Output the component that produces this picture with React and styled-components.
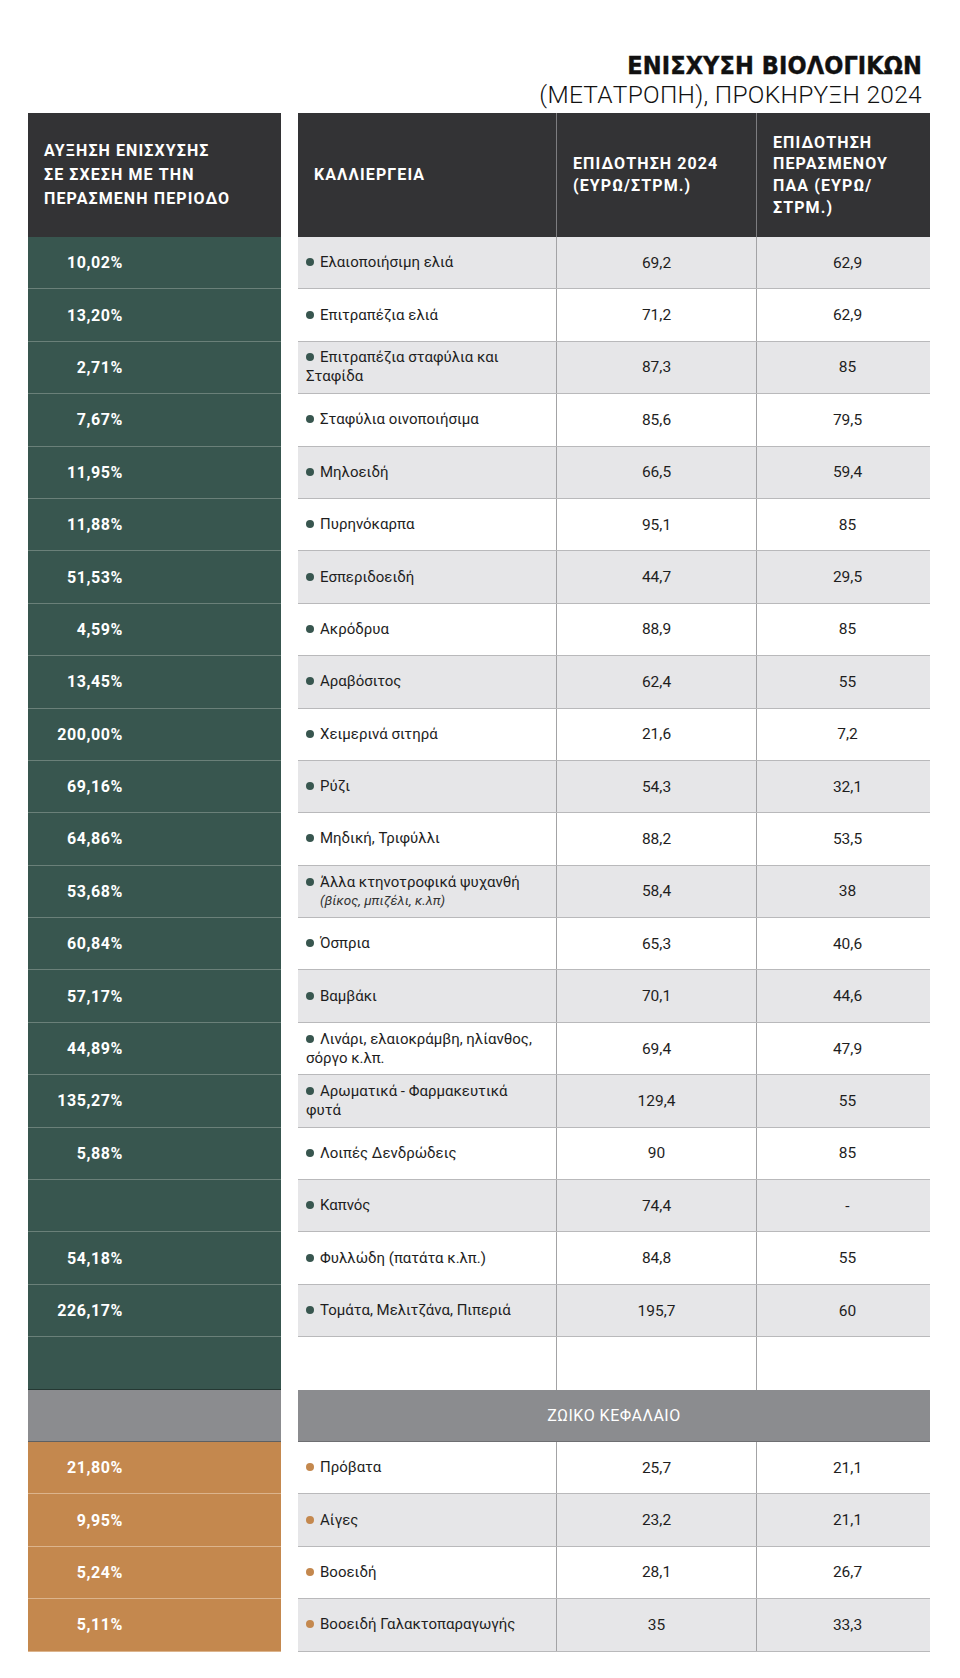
import React from "react";
import styled, { createGlobalStyle } from "styled-components";

const ROW_H = 52.4;
const GREEN = "#38564f";
const ORANGE = "#c4884e";
const GREY = "#8b8c8f";
const DARK = "#333335";

const Global = createGlobalStyle`
  html, body { margin: 0; padding: 0; background: #fff; }
  body { font-family: Roboto, "Noto Sans", sans-serif; color: #222; }
`;

const Page = styled.div`
  width: 960px;
  box-sizing: border-box;
  padding: 51px 30px 26px 28px;
`;

const TitleBlock = styled.header`
  text-align: right;
  padding-right: 8px;
  margin-bottom: 4px;
`;

const TitleMain = styled.h1`
  margin: 0;
  font-family: "Liberation Sans Narrow", "DejaVu Sans Condensed", sans-serif;
  font-weight: 700;
  font-size: 25px;
  line-height: 30px;
  letter-spacing: 0.1px;
  color: #111;
  -webkit-text-stroke: 0.4px #111;
`;

const TitleSub = styled.div`
  font-family: Roboto, sans-serif;
  font-weight: 300;
  font-size: 24.5px;
  line-height: 28px;
  color: #111;
  letter-spacing: 0.3px;
`;

const Body = styled.div`
  display: flex;
  gap: 17px;
  align-items: flex-start;
`;

const Side = styled.div`
  width: 253px;
  display: flex;
  flex-direction: column;
`;

const HeadBox = styled.div`
  height: 124px;
  box-sizing: border-box;
  background: ${DARK};
  color: #fff;
  font-weight: 700;
  font-size: 16px;
  letter-spacing: 1.1px;
  display: flex;
  align-items: center;
  padding-left: ${(p) => p.$pl || 16}px;
  line-height: ${(p) => p.$lh || 21.7}px;
  border-right: ${(p) => (p.$divider ? "1px solid #7d7d80" : "none")};
`;

const PctCell = styled.div`
  height: ${ROW_H}px;
  box-sizing: border-box;
  background: ${(p) => p.$bg};
  border-bottom: 1px solid ${(p) => p.$line};
  display: flex;
  align-items: center;
`;

const PctText = styled.span`
  width: 95px;
  text-align: right;
  color: #fff;
  font-weight: 700;
  font-size: 16px;
  letter-spacing: 0.6px;
`;

const Table = styled.div`
  width: 632px;
  display: flex;
  flex-direction: column;
`;

const Row = styled.div`
  display: grid;
  grid-template-columns: 259px 200px 173px;
  height: ${(p) => (p.$head ? 124 : ROW_H)}px;
  box-sizing: border-box;
  background: ${(p) => p.$bg};
  border-bottom: ${(p) => (p.$noLine ? "none" : "1px solid #b9b9bb")};
`;

const NameCell = styled.div`
  display: flex;
  flex-direction: column;
  justify-content: center;
  padding-left: 8px;
  font-size: 15px;
  line-height: 19px;
  color: #1e1e1e;
  border-right: 1px solid #a3a3a5;
`;

const Bullet = styled.span`
  display: inline-block;
  width: 8px;
  height: 8px;
  border-radius: 50%;
  background: ${(p) => p.$c};
  margin-right: 6px;
  vertical-align: 1px;
`;

const Sub = styled.span`
  font-style: italic;
  font-size: 13.5px;
  line-height: 17px;
  padding-left: 14px;
  color: #333;
`;

const NumCell = styled.div`
  display: flex;
  align-items: center;
  justify-content: center;
  font-size: 15.5px;
  color: #1e1e1e;
  border-right: ${(p) => (p.$last ? "none" : "1px solid #a3a3a5")};
  padding-left: ${(p) => (p.$last ? 8 : 0)}px;
`;

const SectionRow = styled.div`
  height: ${ROW_H}px;
  box-sizing: border-box;
  background: ${GREY};
  color: #fff;
  font-size: 16px;
  letter-spacing: 0.5px;
  display: flex;
  align-items: center;
  justify-content: center;
  border-bottom: 1px solid #6e6f72;
`;

const crops = [
  ["10,02%", ["Ελαιοποιήσιμη ελιά"], "69,2", "62,9"],
  ["13,20%", ["Επιτραπέζια ελιά"], "71,2", "62,9"],
  ["2,71%", ["Επιτραπέζια σταφύλια και", "Σταφίδα"], "87,3", "85"],
  ["7,67%", ["Σταφύλια οινοποιήσιμα"], "85,6", "79,5"],
  ["11,95%", ["Μηλοειδή"], "66,5", "59,4"],
  ["11,88%", ["Πυρηνόκαρπα"], "95,1", "85"],
  ["51,53%", ["Εσπεριδοειδή"], "44,7", "29,5"],
  ["4,59%", ["Ακρόδρυα"], "88,9", "85"],
  ["13,45%", ["Αραβόσιτος"], "62,4", "55"],
  ["200,00%", ["Χειμερινά σιτηρά"], "21,6", "7,2"],
  ["69,16%", ["Ρύζι"], "54,3", "32,1"],
  ["64,86%", ["Μηδική, Τριφύλλι"], "88,2", "53,5"],
  ["53,68%", ["Άλλα κτηνοτροφικά ψυχανθή"], "58,4", "38", "(βίκος, μπιζέλι, κ.λπ)"],
  ["60,84%", ["Όσπρια"], "65,3", "40,6"],
  ["57,17%", ["Βαμβάκι"], "70,1", "44,6"],
  ["44,89%", ["Λινάρι, ελαιοκράμβη, ηλίανθος,", "σόργο κ.λπ."], "69,4", "47,9"],
  ["135,27%", ["Αρωματικά - Φαρμακευτικά", "φυτά"], "129,4", "55"],
  ["5,88%", ["Λοιπές Δενδρώδεις"], "90", "85"],
  ["", ["Καπνός"], "74,4", "-"],
  ["54,18%", ["Φυλλώδη (πατάτα κ.λπ.)"], "84,8", "55"],
  ["226,17%", ["Τομάτα, Μελιτζάνα, Πιπεριά"], "195,7", "60"],
];

const livestock = [
  ["21,80%", ["Πρόβατα"], "25,7", "21,1"],
  ["9,95%", ["Αίγες"], "23,2", "21,1"],
  ["5,24%", ["Βοοειδή"], "28,1", "26,7"],
  ["5,11%", ["Βοοειδή Γαλακτοπαραγωγής"], "35", "33,3"],
];

const Name = ({ lines, sub, color }) => (
  <NameCell>
    <div>
      <Bullet $c={color} />
      {lines.map((l, i) => (
        <React.Fragment key={i}>
          {i > 0 && <br />}
          {l}
        </React.Fragment>
      ))}
    </div>
    {sub && <Sub>{sub}</Sub>}
  </NameCell>
);

export default function App() {
  return (
    <>
      <Global />
      <Page>
        <TitleBlock>
          <TitleMain>ΕΝΙΣΧΥΣΗ ΒΙΟΛΟΓΙΚΩΝ</TitleMain>
          <TitleSub>(ΜΕΤΑΤΡΟΠΗ), ΠΡΟΚΗΡΥΞΗ 2024</TitleSub>
        </TitleBlock>
        <Body>
          <Side>
            <HeadBox $pl={16} $lh={24.3}>
              <div>
                ΑΥΞΗΣΗ ΕΝΙΣΧΥΣΗΣ
                <br />
                ΣΕ ΣΧΕΣΗ ΜΕ ΤΗΝ
                <br />
                ΠΕΡΑΣΜΕΝΗ ΠΕΡΙΟΔΟ
              </div>
            </HeadBox>
            {crops.map((r, i) => (
              <PctCell key={i} $bg={GREEN} $line="#6a8079">
                <PctText>{r[0]}</PctText>
              </PctCell>
            ))}
            <PctCell $bg={GREEN} $line="#253833" />
            <PctCell $bg={GREY} $line="#5f6062" />
            {livestock.map((r, i) => (
              <PctCell key={i} $bg={ORANGE} $line="#dcb48c">
                <PctText>{r[0]}</PctText>
              </PctCell>
            ))}
          </Side>
          <Table>
            <Row $head $bg={DARK} $noLine>
              <HeadBox $divider>ΚΑΛΛΙΕΡΓΕΙΑ</HeadBox>
              <HeadBox $divider>
                <div>
                  ΕΠΙΔΟΤΗΣΗ 2024
                  <br />
                  (ΕΥΡΩ/ΣΤΡΜ.)
                </div>
              </HeadBox>
              <HeadBox>
                <div>
                  ΕΠΙΔΟΤΗΣΗ
                  <br />
                  ΠΕΡΑΣΜΕΝΟΥ
                  <br />
                  ΠΑΑ (ΕΥΡΩ/
                  <br />
                  ΣΤΡΜ.)
                </div>
              </HeadBox>
            </Row>
            {crops.map((r, i) => (
              <Row key={i} $bg={i % 2 === 0 ? "#e6e6e8" : "#fff"}>
                <Name lines={r[1]} sub={r[4]} color={GREEN} />
                <NumCell>{r[2]}</NumCell>
                <NumCell $last>{r[3]}</NumCell>
              </Row>
            ))}
            <Row $bg="#fff" $noLine>
              <NameCell />
              <NumCell />
              <NumCell $last />
            </Row>
            <SectionRow>ΖΩΙΚΟ ΚΕΦΑΛΑΙΟ</SectionRow>
            {livestock.map((r, i) => (
              <Row key={i} $bg={i % 2 === 0 ? "#fff" : "#e6e6e8"}>
                <Name lines={r[1]} color={ORANGE} />
                <NumCell>{r[2]}</NumCell>
                <NumCell $last>{r[3]}</NumCell>
              </Row>
            ))}
          </Table>
        </Body>
      </Page>
    </>
  );
}
